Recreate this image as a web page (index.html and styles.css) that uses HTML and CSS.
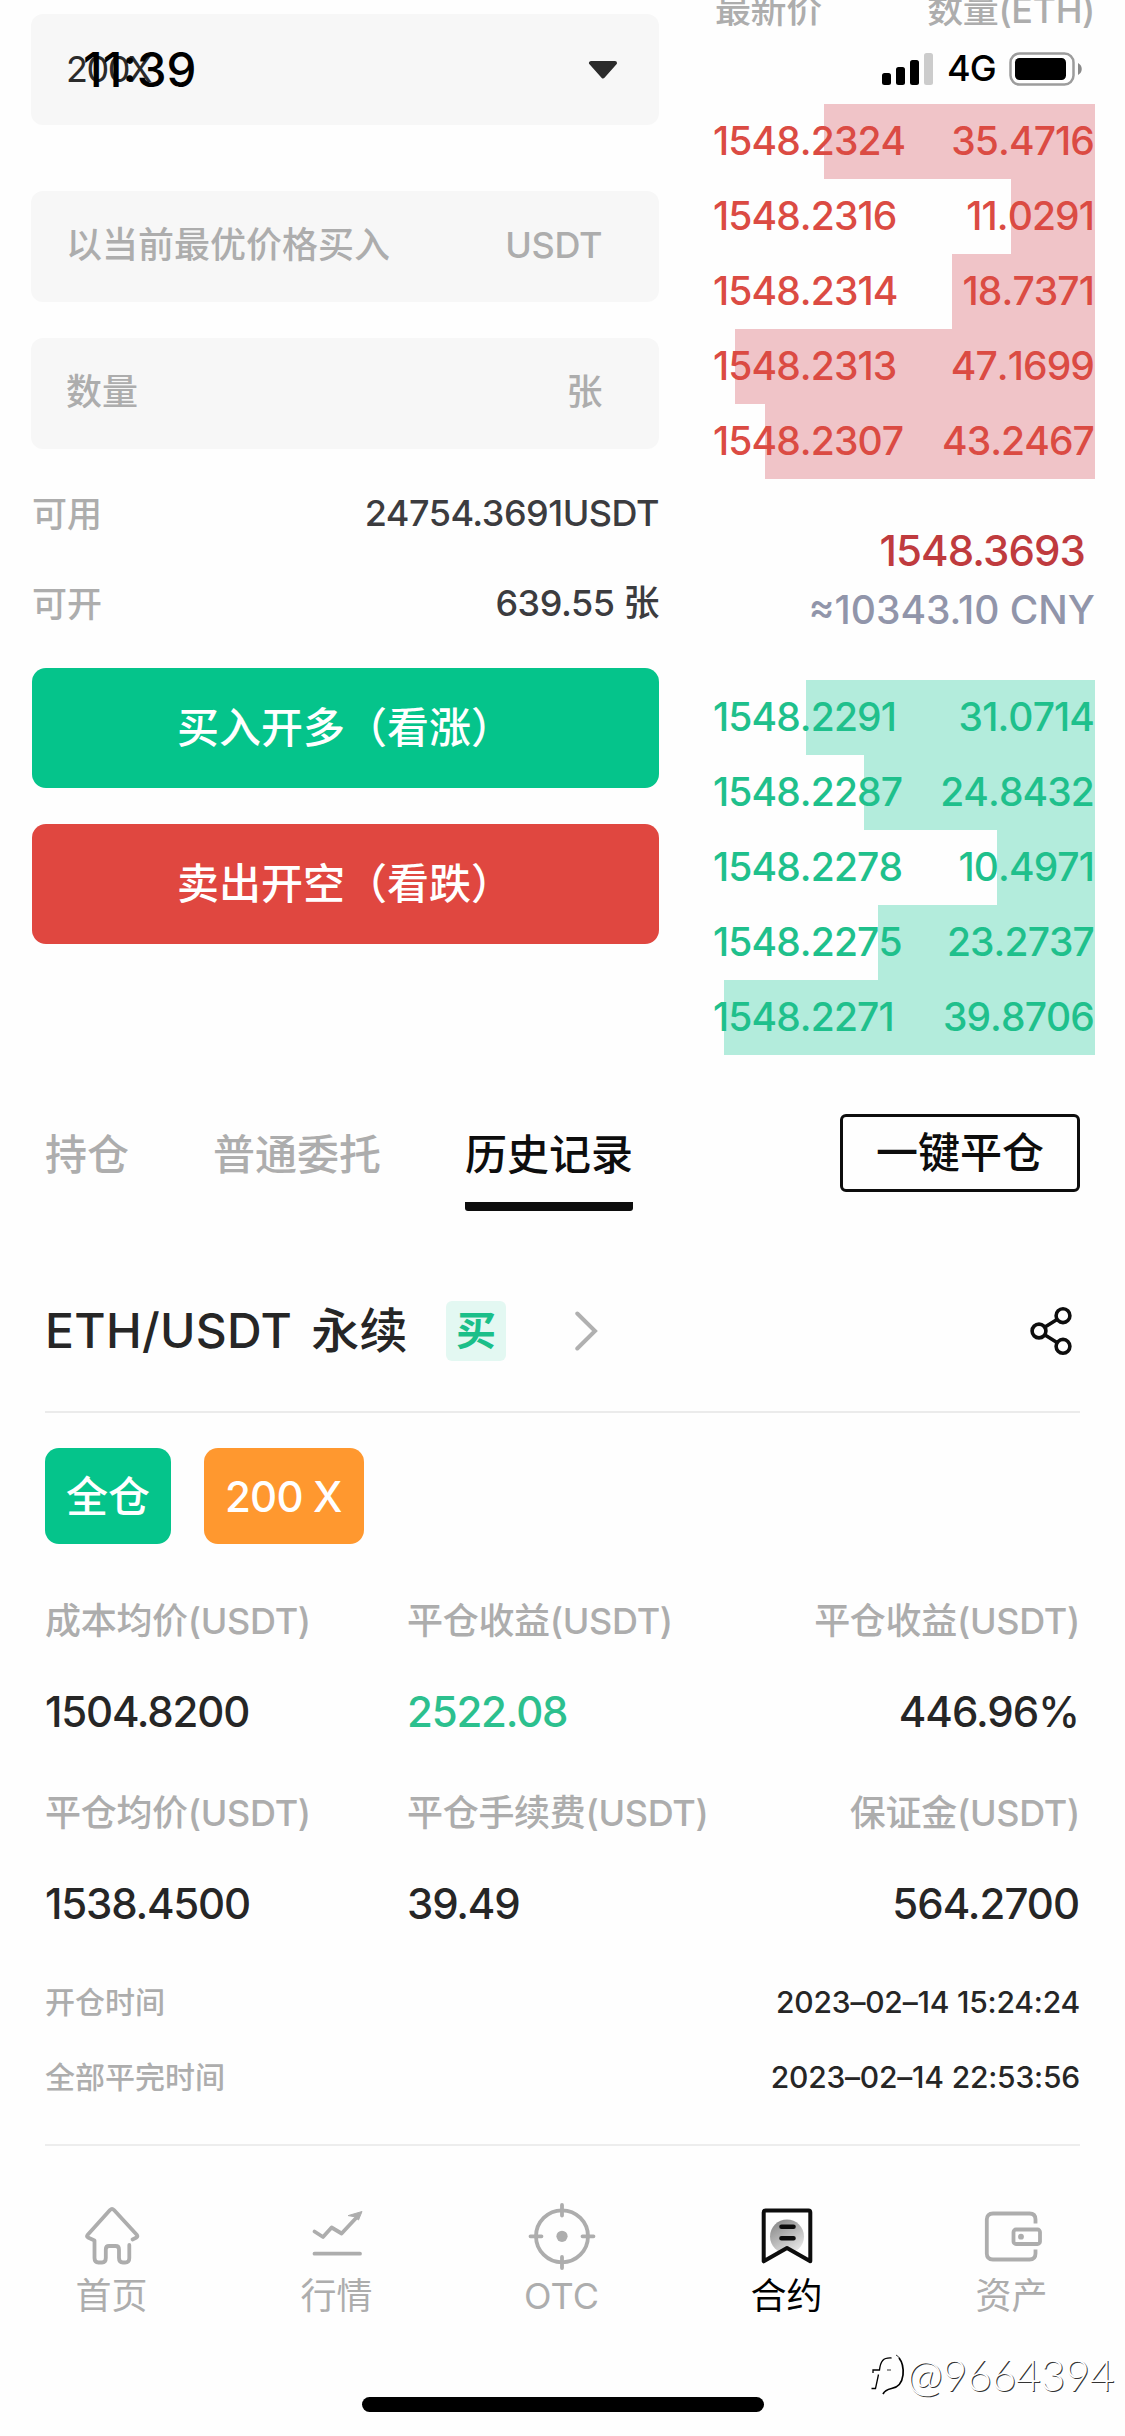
FILE: index.html
```html
<!DOCTYPE html>
<html lang="zh-CN">
<head>
    <meta charset="UTF-8">
    <meta name="viewport" content="width=device-width, initial-scale=1.0">
    <title>ETH/USDT 永续</title>
    <link rel="stylesheet" href="styles.css">
</head>
<body>
    <!-- Phone status bar -->
    <div class="status">
        <span class="time">11:39</span>
        <div class="status-right">
            <svg class="signal" width="51" height="34" viewBox="0 0 51 34">
                <rect x="0" y="21" width="9" height="12" rx="2.5"/>
                <rect x="14" y="15" width="9" height="18" rx="2.5"/>
                <rect x="28" y="8" width="9" height="25" rx="2.5"/>
                <rect x="42" y="1" width="9" height="32" rx="2.5" fill="#cccccc"/>
            </svg>
            <span class="network">4G</span>
            <svg class="battery" width="74" height="34" viewBox="0 0 74 34">
                <rect x="1.5" y="1.5" width="63" height="31" rx="9" fill="none" stroke="#9c9c9c" stroke-width="2.5"/>
                <rect x="6" y="6" width="51" height="22" rx="4.5"/>
                <path d="M69 11c5 2.500 5 9.500 0 12z" fill="#8a8a8a"/>
            </svg>
        </div>
    </div>

    <!-- Order form + order book -->
    <div class="trade">
        <div class="form">
            <div class="field leverage">
                <span>200X</span>
                <svg class="caret" width="30" height="18" viewBox="0 0 30 18"><path d="M3 2h24L15 15.500z" fill="#2b2b2b" stroke="#2b2b2b" stroke-width="4" stroke-linejoin="round"/></svg>
            </div>
            <div class="field price"><span>以当前最优价格买入</span><span class="unit">USDT</span></div>
            <div class="field amount"><span>数量</span><span class="unit">张</span></div>
            <div class="balance">
                <div class="line"><span>可用</span><b>24754.3691USDT</b></div>
                <div class="line"><span>可开</span><b>639.55 张</b></div>
            </div>
            <button class="btn long">买入开多（看涨）</button>
            <button class="btn short">卖出开空（看跌）</button>
        </div>

        <div class="book">
            <div class="book-head"><span>最新价</span><span>数量(ETH)</span></div>
            <div class="asks">
                <div class="row"><i style="width: 71.3%"></i><span>1548.2324</span><span>35.4716</span></div>
                <div class="row"><i style="width: 22.1%"></i><span>1548.2316</span><span>11.0291</span></div>
                <div class="row"><i style="width: 37.6%"></i><span>1548.2314</span><span>18.7371</span></div>
                <div class="row"><i style="width: 94.7%"></i><span>1548.2313</span><span>47.1699</span></div>
                <div class="row"><i style="width: 86.8%"></i><span>1548.2307</span><span>43.2467</span></div>
            </div>
            <div class="last">
                <div class="last-price">1548.3693</div>
                <div class="last-cny">≈10343.10 CNY</div>
            </div>
            <div class="bids">
                <div class="row"><i style="width: 76%"></i><span>1548.2291</span><span>31.0714</span></div>
                <div class="row"><i style="width: 60.8%"></i><span>1548.2287</span><span>24.8432</span></div>
                <div class="row"><i style="width: 25.8%"></i><span>1548.2278</span><span>10.4971</span></div>
                <div class="row"><i style="width: 57.1%"></i><span>1548.2275</span><span>23.2737</span></div>
                <div class="row"><i style="width: 97.6%"></i><span>1548.2271</span><span>39.8706</span></div>
            </div>
        </div>
    </div>

    <!-- Tabs -->
    <div class="tabs">
        <div class="tab">持仓</div>
        <div class="tab">普通委托</div>
        <div class="tab active">历史记录</div>
        <button class="close-all">一键平仓</button>
    </div>

    <!-- History record -->
    <div class="record">
        <div class="record-head">
            <h2>ETH/USDT 永续</h2>
            <span class="side">买</span>
            <svg class="chevron" width="24" height="40" viewBox="0 0 24 40"><path d="M3.300 2.500L21 20L3.300 37.500" fill="none" stroke="#b0b0b0" stroke-width="4" stroke-linecap="round"/></svg>
            <svg class="share" width="44" height="50" viewBox="0 0 44 50" fill="none" stroke="#0d0d0d" stroke-width="3.6">
                <path d="M16 21L28 13.500M16 29L28 36.500"/>
                <circle cx="10" cy="25" r="6.900"/>
                <circle cx="34" cy="9.700" r="6.900"/>
                <circle cx="34" cy="40.300" r="6.900"/>
            </svg>
        </div>

        <div class="tags">
            <span class="tag green">全仓</span>
            <span class="tag orange">200 X</span>
        </div>

        <div class="stats">
            <div class="stat"><label>成本均价(USDT)</label><strong>1504.8200</strong></div>
            <div class="stat"><label>平仓收益(USDT)</label><strong class="up">2522.08</strong></div>
            <div class="stat"><label>平仓收益(USDT)</label><strong>446.96%</strong></div>
            <div class="stat"><label>平仓均价(USDT)</label><strong>1538.4500</strong></div>
            <div class="stat"><label>平仓手续费(USDT)</label><strong>39.49</strong></div>
            <div class="stat"><label>保证金(USDT)</label><strong>564.2700</strong></div>
        </div>

        <div class="times">
            <div class="time-row"><span>开仓时间</span><b>2023–02–14 15:24:24</b></div>
            <div class="time-row"><span>全部平完时间</span><b>2023–02–14 22:53:56</b></div>
        </div>
    </div>

    <!-- Bottom navigation -->
    <div class="nav">
        <a class="nav-item">
            <svg width="70" height="70" viewBox="0 0 70 70" fill="none" stroke="currentColor" stroke-width="3.8" stroke-linecap="round" stroke-linejoin="round">
                <path d="M55.500 39.500L59.500 37.500Q61 36.500 60 35L37 10Q35 8 33 10L10.500 35Q9.500 36.500 11 37.500L17.500 40.500V58Q17.500 62.500 21.500 62.500H25Q28.800 62.500 28.800 58V49.500Q28.800 46 32 46H38.500Q42 46 42 49.500V58Q42 62.500 46 62.500H48Q52.300 62.500 52.300 58V45"/>
            </svg>
            <span>首页</span>
        </a>
        <a class="nav-item">
            <svg width="70" height="70" viewBox="0 0 70 70" fill="none" stroke="currentColor" stroke-width="3.8" stroke-linecap="round" stroke-linejoin="round">
                <path d="M12.500 31.500L21 37L29.600 27.500L39.600 33.500L55 17M12.500 53.700H58"/>
                <path d="M46.500 15.500L60 11.500L56.500 20L53 17z" fill="currentColor" stroke-width="1"/>
            </svg>
            <span>行情</span>
        </a>
        <a class="nav-item">
            <svg width="70" height="70" viewBox="0 0 70 70" fill="none" stroke="currentColor" stroke-width="3.8" stroke-linecap="round">
                <circle cx="35" cy="36.300" r="26"/>
                <path d="M35 5V15.500M35 57V68M3.500 36.300H14.500M55.500 36.300H66.500"/>
                <circle cx="35" cy="36.300" r="5.600" fill="currentColor" stroke="none"/>
            </svg>
            <span>OTC</span>
        </a>
        <a class="nav-item active">
            <svg width="70" height="70" viewBox="0 0 70 70" fill="none" stroke="#0d0d0d" stroke-width="4" stroke-linecap="round" stroke-linejoin="round">
                <defs>
                    <linearGradient id="coin" x1="0.2" y1="0" x2="0.8" y2="1">
                        <stop offset="0" stop-color="#888888"/>
                        <stop offset="1" stop-color="#ececec"/>
                    </linearGradient>
                </defs>
                <circle cx="35" cy="36.500" r="17" fill="url(#coin)" stroke="none"/>
                <path d="M12 62V60L35 48L58 60V72H12z" stroke="none" fill="#fefefe"/>
                <path d="M13.500 10.600H56.500Q58.300 10.600 58.300 12.400V61.300L35 48L11.700 61.300V12.400Q11.700 10.600 13.500 10.600z"/>
                <path d="M29.500 26.700H41.500M29.500 38.200H41.500" stroke-width="4.600"/>
            </svg>
            <span>合约</span>
        </a>
        <a class="nav-item">
            <svg width="70" height="70" viewBox="0 0 70 70" fill="none" stroke="currentColor" stroke-width="3.8">
                <path d="M58.500 23.500V19.500Q58.500 13.500 52.500 13.500H16Q9.800 13.500 9.800 19.500V53.500Q9.800 59.500 16 59.500H52.500Q58.500 59.500 58.500 53.500V49.500"/>
                <rect x="36.500" y="29.500" width="26.500" height="14.500" rx="2.500"/>
                <circle cx="44" cy="36.700" r="2.900" fill="currentColor" stroke="none"/>
            </svg>
            <span>资产</span>
        </a>
    </div>
    <div class="home-bar"></div>

    <!-- Watermark -->
    <div class="watermark">
        <svg width="36" height="44" viewBox="0 0 36 44" fill="none" stroke="#000000">
            <path d="M20.500 5C12 4.500 9.500 8 8.500 17H2V20M7.500 21.500L4.500 35.500H0.500" stroke-width="1.300"/>
            <path d="M28 5Q33 11 32 22Q30.500 34 20.500 35.500Q14 37 12 41" stroke-width="1.700"/>
            <path d="M25 2Q28 3.500 29 6M16 17H20" stroke-width="0.800"/>
        </svg>
        <span>@9664394</span>
    </div>
</body>
</html>
```
FILE: styles.css
```css
* {
    box-sizing: border-box;
}

body {
    position: relative;
    margin: 0;
    width: 1125px;
    height: 2436px;
    overflow: hidden;
    background: #fefefe;
    color: #262626;
    font-family: Inter, "Noto Sans CJK SC", sans-serif;
    line-height: 1.2;
}

b, strong, h2 {
    font-weight: 500;
}

button {
    display: block;
    padding: 0;
    border: none;
    font-family: inherit;
    font-size: 42px;
    font-weight: 500;
    line-height: 50px;
}

svg {
    display: block;
    flex: none;
}

/* Status bar */
.status {
    position: absolute;
    top: 44px;
    left: 0;
    width: 100%;
    height: 50px;
    padding: 0 42px 0 83px;
    display: flex;
    align-items: center;
    justify-content: space-between;
    color: #000;
    z-index: 2;
}

.time {
    font-size: 47.5px;
    font-weight: 500;
}

.status-right {
    display: flex;
    align-items: center;
}

.network {
    width: 76px;
    padding-left: 14px;
    font-size: 36px;
    font-weight: 450;
    letter-spacing: -1px;
}

/* Trade area */
.trade {
    display: flex;
    justify-content: space-between;
    height: 1100px;
    padding: 0 30px 0 31px;
}

.form {
    width: 628px;
    padding-top: 14px;
}

.field {
    display: flex;
    align-items: center;
    justify-content: space-between;
    height: 111px;
    padding: 0 57px 2px 35px;
    border-radius: 12px;
    background: #f7f7f7;
    color: #adadad;
    font-size: 36px;
    font-weight: 500;
}

.leverage {
    margin-bottom: 66px;
    padding-right: 41px;
    padding-bottom: 0;
    color: #2b2b2b;
    font-weight: 400;
    letter-spacing: -1.5px;
}

.price {
    margin-bottom: 36px;
}

.unit {
    letter-spacing: -0.4px;
}

.balance {
    padding: 20px 0 19px 1px;
}

.line {
    display: flex;
    align-items: center;
    justify-content: space-between;
    height: 90px;
    color: #adadad;
    font-size: 35px;
    font-weight: 500;
}

.line b {
    color: #3c3c3f;
    font-size: 36px;
    letter-spacing: -0.5px;
}

.btn {
    width: 627px;
    height: 120px;
    margin: 0 0 36px 1px;
    padding-right: 1px;
    padding-bottom: 1px;
    border-radius: 14px;
    color: #fff;
}

.long {
    background: #05c48b;
}

.short {
    background: #e04740;
}

/* Order book */
.book {
    width: 380px;
}

.book-head {
    display: flex;
    justify-content: space-between;
    height: 104px;
    margin-top: -16px;
    margin-bottom: 16px;
    line-height: 52px;
    color: #adadad;
    font-size: 36px;
    font-weight: 500;
    letter-spacing: -0.4px;
}

.row {
    position: relative;
    display: flex;
    align-items: center;
    justify-content: space-between;
    height: 75px;
    font-size: 39px;
    font-weight: 500;
    font-kerning: none;
    letter-spacing: -0.9px;
}

/* depth bar behind the numbers */
.row i {
    position: absolute;
    top: 0;
    right: 0;
    height: 100%;
}

.row span {
    position: relative;
    left: -2px;
}

.row span:last-child {
    left: -1px;
}

.asks {
    color: #db4b43;
}

.asks i {
    background: #f0c4c8;
}

.bids {
    color: #1fc08c;
}

.bids i {
    background: #b3ecdc;
}

.last {
    height: 201px;
    padding-top: 42px;
    text-align: right;
}

.last-price {
    padding-right: 10px;
    line-height: 60px;
    color: #bf3b3e;
    font-size: 42px;
    font-weight: 500;
    letter-spacing: -0.9px;
}

.last-cny {
    line-height: 57px;
    color: #9195aa;
    font-size: 39px;
    font-weight: 500;
}

/* Tabs */
.tabs {
    display: flex;
    height: 111px;
    padding: 0 45px;
    gap: 84px;
}

.tab {
    height: 111px;
    line-height: 109px;
    color: #adadad;
    font-size: 42px;
    font-weight: 500;
}

.tab.active {
    border-bottom: 9px solid #0d0d0d;
    border-radius: 3px;
    color: #0d0d0d;
}

.close-all {
    width: 240px;
    height: 78px;
    margin: 14px 0 0 auto;
    border: 3px solid #0d0d0d;
    border-radius: 6px;
    background: #fefefe;
    color: #0d0d0d;
}

/* Record */
.record {
    height: 935px;
    margin: 0 45px;
    border-bottom: 2px solid #ededed;
}

.record-head {
    display: flex;
    align-items: center;
    height: 202px;
    padding-top: 40px;
    border-bottom: 2px solid #ebebeb;
}

.record-head h2 {
    width: 401px;
    margin: 0;
    font-size: 48px;
    letter-spacing: 0.3px;
    word-spacing: 6px;
    white-space: nowrap;
}

.side {
    width: 60px;
    height: 60px;
    border-radius: 6px;
    background: #e3f8f2;
    color: #1bbf89;
    font-size: 40px;
    font-weight: 700;
    line-height: 60px;
    text-align: center;
}

.chevron {
    margin-left: 68px;
}

.share {
    margin: 0 7px 0 auto;
}

.tags {
    display: flex;
    gap: 33px;
    padding: 35px 0 32px;
}

.tag {
    height: 96px;
    padding: 0 21px;
    border-radius: 14px;
    color: #fff;
    font-size: 42px;
    font-weight: 500;
    line-height: 97px;
}

.orange {
    width: 160px;
    background: #ff982f;
    letter-spacing: -0.8px;
}

.green {
    background: #05c48b;
}

.stats {
    display: grid;
    grid-template-columns: 362px 1fr auto;
    row-gap: 10px;
}

.stat label {
    display: block;
    color: #adadad;
    font-size: 36px;
    font-weight: 500;
    line-height: 91px;
    height: 90px;
    letter-spacing: -0.3px;
}

.stat strong {
    display: block;
    font-size: 42px;
    line-height: 92px;
    letter-spacing: -1.2px;
}

.stat:nth-child(3n) {
    text-align: right;
}

.stat:nth-child(3n) strong {
    padding-right: 1px;
    letter-spacing: -1px;
}

.stat .up {
    color: #2cc08e;
}

.times {
    padding-top: 15px;
}

.time-row {
    display: flex;
    align-items: center;
    justify-content: space-between;
    height: 75px;
    padding-bottom: 1px;
    color: #adadad;
    font-size: 30px;
    font-weight: 500;
}

.time-row b {
    color: #262626;
    letter-spacing: -0.2px;
}

/* Bottom nav */
.nav {
    display: flex;
    margin-left: -1px;
    padding-top: 54px;
}

.nav-item {
    display: flex;
    flex-direction: column;
    align-items: center;
    width: 225px;
    height: 197px;
    color: #adadad;
    font-size: 36px;
    font-weight: 400;
    line-height: 53px;
}

.nav-item.active {
    color: #000;
}

.home-bar {
    width: 402px;
    height: 15px;
    margin: 0 auto;
    border-radius: 8px;
    background: #000;
}

/* Watermark over the bottom corner */
.watermark {
    position: absolute;
    right: 11px;
    bottom: 35px;
    display: flex;
    align-items: center;
    color: #fff;
    font-family: Lato, sans-serif;
    font-size: 43px;
    font-weight: 300;
    letter-spacing: -0.4px;
    text-shadow: 1px 1px 0 #333;
}
```
